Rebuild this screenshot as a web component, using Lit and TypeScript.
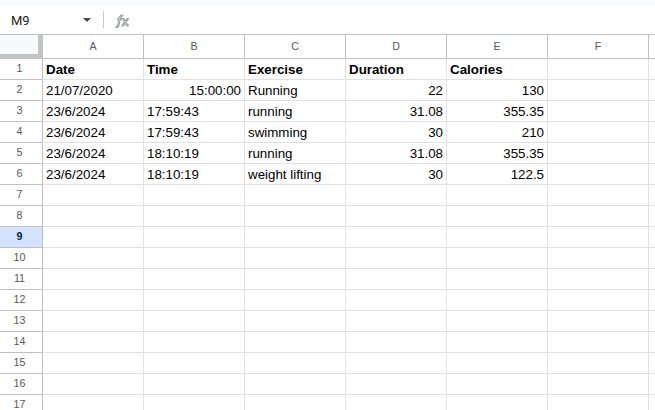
import { LitElement, html, css } from "lit";
import { customElement } from "lit/decorators.js";
import { classMap } from "lit/directives/class-map.js";

const COLUMNS = ["A", "B", "C", "D", "E", "F", ""];
const ROWS = Array.from({ length: 17 }, (_, i) => i + 1);
const ACTIVE_ROW = 9;

const DATA: string[][] = [
  ["Date", "Time", "Exercise", "Duration", "Calories"],
  ["21/07/2020", "15:00:00", "Running", "22", "130"],
  ["23/6/2024", "17:59:43", "running", "31.08", "355.35"],
  ["23/6/2024", "17:59:43", "swimming", "30", "210"],
  ["23/6/2024", "18:10:19", "running", "31.08", "355.35"],
  ["23/6/2024", "18:10:19", "weight lifting", "30", "122.5"],
];

@customElement("formula-bar")
class FormulaBar extends LitElement {
  static styles = css`
    :host {
      display: flex;
      align-items: center;
      flex: none;
      box-sizing: border-box;
      height: 35px;
      padding: 6px 0 1px 11px;
      border-bottom: 1px solid #c0c0c0;
      background: linear-gradient(#f9fbfd 6px, #fff 6px);
      color: #202124;
      font-family: Roboto, "Liberation Sans", sans-serif;
      font-size: 13px;
    }
    .name { width: 72px; line-height: 16px; padding-top: 2px; }
    .arrow { width: 8px; height: 4px; display: block; }
    .divider { width: 1px; height: 17px; margin: 0 11px 0 12px; background: #c7c7c7; }
    .fx { width: 16px; height: 16px; display: block; margin-top: 2px; }
    .outline { stroke: #8f9390; stroke-width: 2.300; }
    .inner { stroke: #e8eae8; stroke-width: 0.6; }
  `;
  render() {
    const f = "M.6 13.700C2.200 14.400 3.100 13.300 3.500 11.400L4.800 5.200C5.300 3 6.500 2.200 8.300 2.900M2.200 6.200H7.500";
    const x = "M7.600 6.200h1.100l3.500 6.100h1.600M13.700 6.200h-1.200l-4.700 6.100h-1.200";
    return html`
      <span class="name">M9</span>
      <svg class="arrow" viewBox="0 0 8 4"><path d="M0 0h8L4 4z" fill="#444746" /></svg>
      <span class="divider"></span>
      <svg class="fx" viewBox="0 0 16 16" fill="none">
        <path class="outline" d=${f + x} />
        <path class="inner" d=${f + x} />
      </svg>
    `;
  }
}

@customElement("sheet-grid")
class SheetGrid extends LitElement {
  static styles = css`
    :host {
      display: grid;
      grid-template-columns: 43px repeat(7, 101px);
      grid-template-rows: 24px repeat(17, 21px);
      font-family: "Liberation Sans", Arial, sans-serif;
      color: #000;
    }
    div { box-sizing: border-box; white-space: nowrap; }
    .corner {
      background: #f8f9fa;
      border: solid #c4c4c4;
      border-width: 0 5px 5px 0;
    }
    .col,
    .row {
      border: solid #c0c0c0;
      border-width: 0 1px 1px 0;
      text-align: center;
      font-size: 10.667px;
      color: #575757;
    }
    .col { line-height: 23px; }
    .row { padding-right: 3px; line-height: 19px; }
    .row.active { background: #d3e3fd; color: #041e49; font-weight: bold; }
    .cell {
      border: solid #e1e1e1;
      border-width: 0 1px 1px 0;
      padding: 0 3px;
      font-size: 13.333px;
      line-height: 21px;
    }
    .bold { font-weight: bold; }
    .right { text-align: right; }
  `;
  private isNumeric(row: number, col: number) {
    return (row > 1 && col >= 3) || (row === 2 && col === 1);
  }
  render() {
    return html`
      <div class="corner"></div>
      ${COLUMNS.map((c) => html`<div class="col">${c}</div>`)}
      ${ROWS.map(
        (r) => html`
          <div class=${classMap({ row: true, active: r === ACTIVE_ROW })}>${r}</div>
          ${COLUMNS.map(
            (_, c) => html`<div
              class=${classMap({ cell: true, bold: r === 1, right: this.isNumeric(r, c) })}
            >${DATA[r - 1]?.[c] ?? ""}</div>`
          )}
        `
      )}
    `;
  }
}

@customElement("app-root")
class AppRoot extends LitElement {
  static styles = css`
    :host {
      display: flex;
      flex-direction: column;
      width: 655px;
      height: 410px;
      overflow: hidden;
      background: #fff;
    }
  `;
  render() {
    return html`<formula-bar></formula-bar><sheet-grid></sheet-grid>`;
  }
}
